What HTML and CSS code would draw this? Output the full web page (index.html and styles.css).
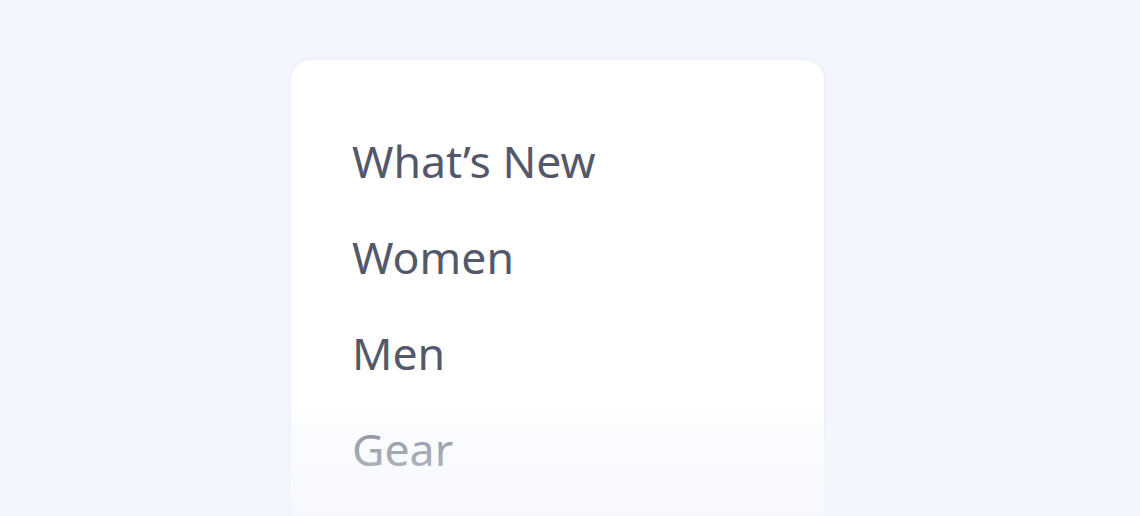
FILE: index.html
```html
<!DOCTYPE html>
<html lang="en">
<head>
<meta charset="utf-8">
<title>Menu</title>
<link rel="stylesheet" href="styles.css">
</head>
<body>
<div class="stage">
  <nav class="card">
    <ul class="menu">
      <li class="item">What’s New</li>
      <li class="item">Women</li>
      <li class="item">Men</li>
      <li class="item">Gear</li>
    </ul>
    <div class="fade"></div>
  </nav>
</div>
</body>
</html>
```
FILE: styles.css
```css
html, body {
  margin: 0;
  padding: 0;
  background: #f3f6fd;
  height: 100%;
  overflow: hidden;
}
.stage {
  display: flex;
  justify-content: flex-start;
  padding: 60px 0 0 291px;
}
.card {
  position: relative;
  width: 533px;
  height: 456px;
  background: #ffffff;
  border-radius: 20px 20px 0 0;
  box-shadow: 0 0 4px rgba(200, 210, 235, 0.35);
  box-sizing: border-box;
  padding: 53px 0 0 61px;
}
.menu {
  list-style: none;
  margin: 0;
  padding: 0;
  font-family: "Noto Sans", "Open Sans", sans-serif;
  font-size: 44.6px;
  font-weight: 400;
  line-height: 96px;
  color: #535968;
}
.item {
  white-space: nowrap;
}
.fade {
  position: absolute;
  left: -6px;
  right: -6px;
  top: 340px;
  bottom: 0;
  background: linear-gradient(to bottom,
    rgba(243, 246, 253, 0) 0%,
    rgba(243, 246, 253, 0.45) 35%,
    rgba(243, 246, 253, 0.55) 55%,
    rgba(243, 246, 253, 0.75) 100%);
}
```
